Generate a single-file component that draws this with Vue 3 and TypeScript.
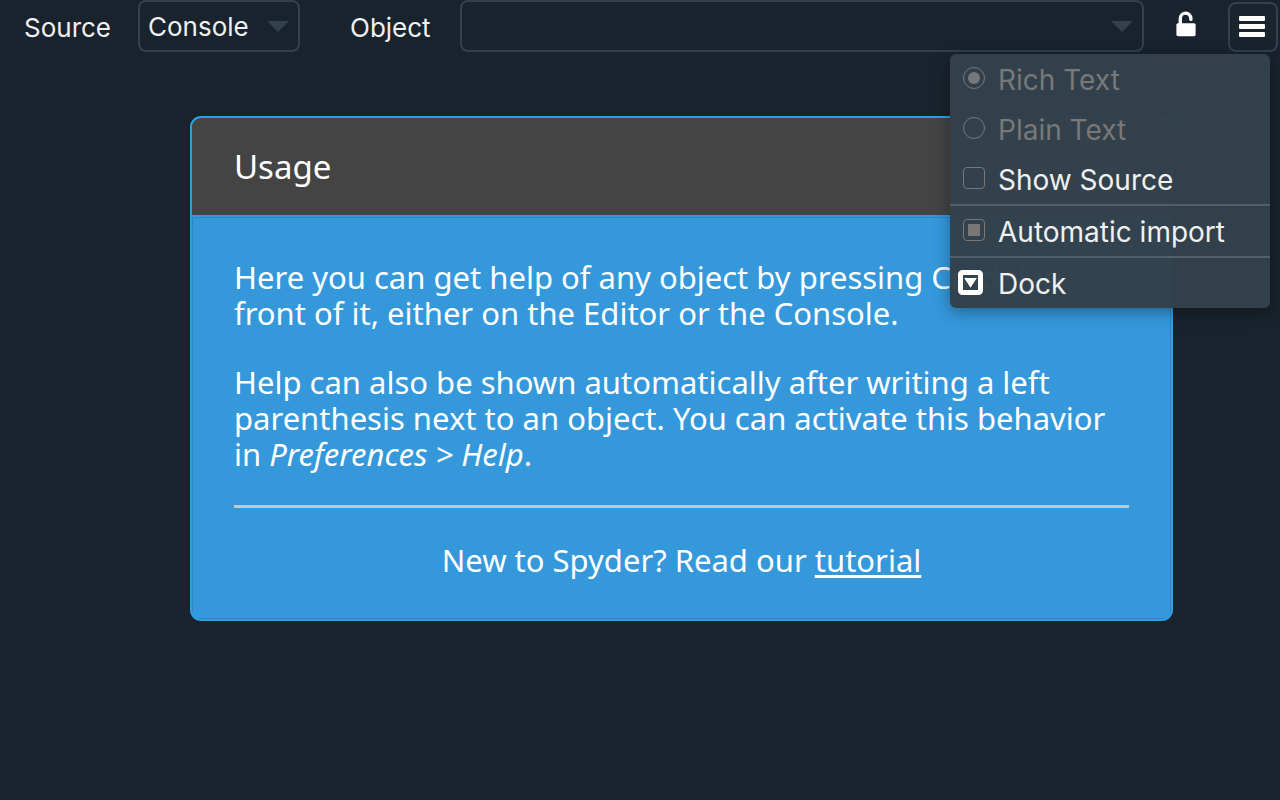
<script setup lang="ts">
import { ref } from 'vue'

const source = ref('Console')
const objectName = ref('')
const textMode = ref('rich')
const showSource = ref(false)
const automaticImport = ref(true)
</script>

<template>
  <div class="help-pane">
    <header class="toolbar">
      <label class="source-label" for="source">Source</label>
      <div class="combo source-combo">
        <select id="source" v-model="source">
          <option>Console</option>
          <option>Editor</option>
        </select>
        <svg class="arrow" viewBox="0 0 22 11" aria-hidden="true"><path d="M0 0H22L11 11Z" /></svg>
      </div>
      <label class="object-label" for="object">Object</label>
      <div class="combo object-combo">
        <input id="object" v-model="objectName" type="text" />
        <svg class="arrow" viewBox="0 0 22 11" aria-hidden="true"><path d="M0 0H22L11 11Z" /></svg>
      </div>
      <button class="lock" type="button" aria-label="Lock">
        <svg viewBox="0 0 20 26" aria-hidden="true">
          <path class="shackle" d="M4.3 13V8A5.3 5.7 0 0 1 14.9 7.6V8.4" />
          <rect x="0.4" y="12.2" width="19.2" height="13" rx="1.6" />
        </svg>
      </button>
      <div class="options">
        <button class="menu-button" type="button" aria-label="Options" aria-expanded="true">
          <svg viewBox="0 0 26 22" aria-hidden="true">
            <rect width="26" height="5" rx="1" />
            <rect y="8" width="26" height="5" rx="1" />
            <rect y="16" width="26" height="5" rx="1" />
          </svg>
        </button>
        <div class="menu">
          <label class="item disabled">
            <input v-model="textMode" type="radio" name="mode" value="rich" disabled />
            <span>Rich Text</span>
          </label>
          <label class="item disabled">
            <input v-model="textMode" type="radio" name="mode" value="plain" disabled />
            <span>Plain Text</span>
          </label>
          <label class="item">
            <input v-model="showSource" type="checkbox" />
            <span>Show Source</span>
          </label>
          <label class="item divided">
            <input v-model="automaticImport" type="checkbox" />
            <span>Automatic import</span>
          </label>
          <button class="item dock divided" type="button">
            <svg viewBox="0 0 26 26" aria-hidden="true">
              <rect class="frame" x="2.5" y="2.5" width="20" height="20" rx="2" />
              <path d="M6.2 8H18.8L12.5 17.8Z" />
            </svg>
            <span>Dock</span>
          </button>
        </div>
      </div>
    </header>

    <main>
      <article class="card">
        <h1>Usage</h1>
        <div class="content">
          <p>Here you can get help of any object by pressing Cmd+I in front of it, either on the Editor or the Console.</p>
          <p>Help can also be shown automatically after writing a left parenthesis next to an object. You can activate this behavior in <em>Preferences &gt; Help</em>.</p>
          <hr />
          <p class="tutorial">New to Spyder? Read our <a href="#tutorial">tutorial</a></p>
        </div>
      </article>
    </main>
  </div>
</template>

<style>
body {
  margin: 0;
  background: #19232d;
}
</style>

<style scoped>
.help-pane {
  min-height: 100vh;
  background: #19232d;
  color: #f0f0f0;
  font-family: Inter, "Liberation Sans", sans-serif;
  font-size: 26px;
}
.help-pane * {
  box-sizing: border-box;
}
.toolbar {
  display: flex;
  align-items: center;
  height: 54px;
  padding: 0 2px 0 24px;
}
.source-label {
  width: 114px;
}
.object-label {
  width: 110px;
  margin-left: 50px;
}
.combo {
  position: relative;
  height: 52px;
  align-self: flex-start;
}
.source-combo {
  width: 162px;
}
.object-combo {
  flex: 1;
  min-width: 0;
}
.combo select,
.combo input {
  width: 100%;
  height: 100%;
  appearance: none;
  padding: 0 40px 0 8px;
  border: 2px solid #32414b;
  border-radius: 8px;
  background: transparent;
  color: inherit;
  font: inherit;
  outline: none;
}
.combo option {
  background: #19232d;
}
.arrow {
  position: absolute;
  top: 21px;
  right: 11px;
  width: 22px;
  height: 11px;
  fill: #32414b;
  pointer-events: none;
}
button {
  padding: 0;
  border: 0;
  background: none;
  color: inherit;
  font: inherit;
}
.lock {
  display: flex;
  justify-content: center;
  width: 84px;
  padding-bottom: 6px;
}
.lock svg {
  width: 20px;
  height: 26px;
  fill: #fff;
}
.lock .shackle {
  fill: none;
  stroke: #fff;
  stroke-width: 3.4;
  stroke-linecap: round;
}
.options {
  position: relative;
}
.menu-button {
  display: flex;
  align-items: center;
  justify-content: center;
  width: 50px;
  height: 50px;
  padding-right: 2px;
  border: 2px solid #32414b;
  border-radius: 8px;
}
.menu-button svg {
  width: 26px;
  height: 22px;
  fill: #fff;
}
.menu {
  position: absolute;
  z-index: 1;
  top: 52px;
  right: 8px;
  width: 320px;
  border-radius: 6px;
  background: rgba(50, 65, 75, 0.98);
  box-shadow: 0 4px 16px rgba(0, 0, 0, 0.35);
  overflow: hidden;
  font-size: 28px;
}
.item {
  display: flex;
  align-items: center;
  width: 100%;
  height: 50px;
  padding: 0 13px;
  line-height: 34px;
}
.item span {
  padding-top: 2px;
  white-space: nowrap;
}
.disabled {
  color: #787878;
}
.divided {
  height: 52px;
  border-top: 2px solid #505f69;
}
.item input {
  appearance: none;
  display: grid;
  place-items: center;
  width: 22px;
  height: 22px;
  flex: none;
  margin: 0 13px 2px 0;
  border: 1px solid #787878;
  border-radius: 4px;
}
.item input[type="radio"] {
  border-radius: 50%;
}
.item input:checked::before {
  content: "";
  width: 12px;
  height: 12px;
  border-radius: inherit;
  background: #787878;
}
.item input[type="checkbox"]:checked::before {
  border-radius: 0;
}
.dock {
  padding-left: 8px;
}
.dock svg {
  width: 26px;
  height: 26px;
  flex: none;
  margin-right: 14px;
  fill: #fff;
}
.dock .frame {
  fill: none;
  stroke: #fff;
  stroke-width: 5;
}
main {
  padding: 62px 107px 0 190px;
  color: #fff;
  font-family: "Noto Sans", "Open Sans", sans-serif;
  font-size: 31px;
  line-height: 36px;
}
.card {
  border: 2px solid #2ba0e5;
  border-radius: 11px;
  background: #3498db;
  overflow: hidden;
}
h1 {
  margin: 0;
  padding: 25px 42px 24px;
  border-bottom: 2px solid #3498db;
  background: #444;
  font-size: 33px;
  font-weight: 400;
  line-height: 48px;
}
.content {
  padding: 41px 41px 40px;
  border: 1px solid #2c86c2;
}
p {
  margin: 0 0 33px;
}
hr {
  height: 3px;
  margin: 0 0 34px;
  border: 0;
  background: #c5c8ca;
}
.tutorial {
  margin: 0;
  text-align: center;
}
a {
  color: inherit;
  text-decoration-thickness: 3px;
  text-underline-offset: 3px;
}
</style>
